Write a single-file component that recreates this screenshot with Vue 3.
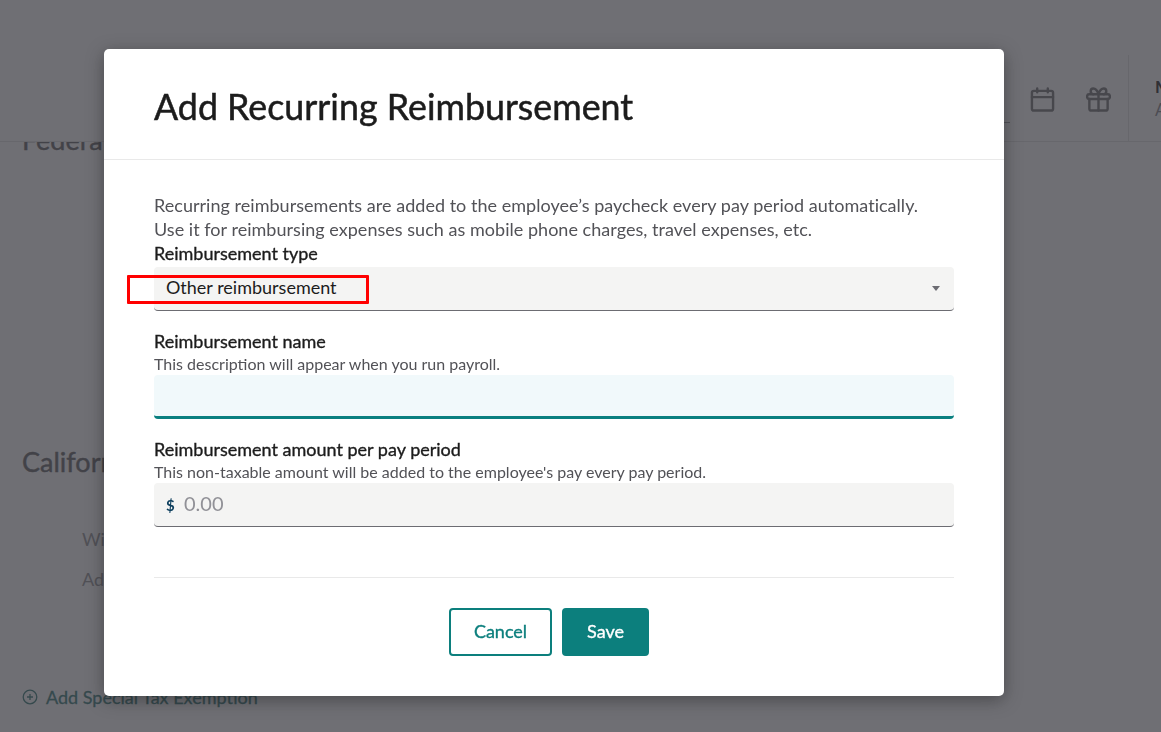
<script setup>
const note = [
  'Recurring reimbursements are added to the employee’s paycheck every pay period automatically.',
  'Use it for reimbursing expenses such as mobile phone charges, travel expenses, etc.',
]
</script>

<template>
  <div class="page">
    <header class="topbar">
      <div class="search"></div>
      <svg class="icon calendar" viewBox="0 0 26 26" fill="none" stroke="currentColor" stroke-width="2.5" stroke-linecap="round" stroke-linejoin="round">
        <rect x="2" y="4" width="22" height="20.5" rx="2" />
        <path d="M2 10.500h22M7.500 1.500v4M18.500 1.500v4" />
      </svg>
      <svg class="icon gift" viewBox="0 0 26 26" fill="none" stroke="currentColor" stroke-width="2.5" stroke-linecap="round" stroke-linejoin="round">
        <path d="M3.500 12.500v10a2 2 0 0 0 2 2h15a2 2 0 0 0 2-2v-10" />
        <rect x="1.200" y="7.500" width="23.600" height="5" rx="2" />
        <path d="M13 7.500v17M13 7.500c-1-3.500-3-6-5.500-6-3.500 0-3.500 6 0 6M13 7.500c1-3.500 3-6 5.500-6 3.500 0 3.500 6 0 6" />
      </svg>
      <div class="account">
        <strong>M</strong>
        <span>A</span>
      </div>
    </header>
    <main class="content">
      <h2 class="federal">Federal</h2>
      <h2 class="california">California</h2>
      <p class="row first">Withholding</p>
      <p class="row">Additional</p>
      <a class="add-link">
        <svg viewBox="0 0 16 16" fill="none" stroke="currentColor" stroke-width="1.3">
          <circle cx="8" cy="8" r="6.8" />
          <path d="M8 5v6M5 8h6" />
        </svg>
        Add Special Tax Exemption
      </a>
    </main>
  </div>

  <div class="overlay">
    <section class="modal">
      <div class="modal-head">
        <h1>Add Recurring Reimbursement</h1>
      </div>
      <div class="modal-body">
        <p v-for="line in note" :key="line" class="note">{{ line }}</p>

        <label class="label">Reimbursement type</label>
        <div class="select">
          <span>Other reimbursement</span>
          <i class="caret"></i>
          <div class="highlight"></div>
        </div>

        <label class="label name-label">Reimbursement name</label>
        <div class="hint">This description will appear when you run payroll.</div>
        <input class="field focused" type="text" />

        <label class="label amount-label">Reimbursement amount per pay period</label>
        <div class="hint">This non-taxable amount will be added to the employee's pay every pay period.</div>
        <div class="money">
          <span class="dollar">$</span>
          <input type="text" placeholder="0.00" />
        </div>

        <div class="actions">
          <button class="btn ghost">Cancel</button>
          <button class="btn solid">Save</button>
        </div>
      </div>
    </section>
  </div>
</template>

<style>
html, body {
  margin: 0;
  height: 732px;
  overflow: hidden;
}
</style>

<style scoped>
.page {
  height: 732px;
  display: flex;
  flex-direction: column;
  background: #fff;
  font-family: Lato, "Liberation Sans", sans-serif;
  overflow: hidden;
}

.topbar {
  height: 142px;
  flex: none;
  display: flex;
  align-items: center;
  box-sizing: border-box;
  border-bottom: 1px solid #e8e8e8;
  padding-top: 84px;
  padding-left: 1030px;
  padding-bottom: 26px;
  position: relative;
}

.search {
  position: absolute;
  left: 990px;
  width: 20px;
  top: 122px;
  border-bottom: 1px solid #b0b0b0;
}

.icon {
  width: 25px;
  height: 25px;
  color: #8c8c8e;
  flex: none;
}

.gift {
  margin-left: 31px;
}

.account {
  flex: none;
  align-self: stretch;
  margin-top: -29px;
  margin-bottom: -26px;
  margin-left: 17px;
  padding: 20px 0 0 26px;
  border-left: 1px solid #e8e8e8;
  font-size: 17px;
  line-height: 23px;
  color: #9c9ca2;
}

.account strong,
.account span {
  display: block;
}

.account strong {
  color: #4a4a4c;
}

.content {
  flex: 1;
  overflow: hidden;
  padding-left: 22px;
}

.federal,
.california {
  margin: 0;
  font-size: 27px;
  line-height: 32px;
  font-weight: 400;
  -webkit-text-stroke: 0.4px currentColor;
  color: #7e7e80;
}

.federal {
  margin-top: -18px;
}

.california {
  margin-top: 290px;
}

.row {
  margin: 16px 0 0 60px;
  font-size: 18px;
  line-height: 24px;
  color: #a8a8aa;
}

.row.first {
  margin-top: 49px;
}

.add-link {
  display: flex;
  align-items: center;
  gap: 8px;
  margin-top: 95px;
  font-size: 18px;
  line-height: 22px;
  -webkit-text-stroke: 0.3px currentColor;
  color: #5b9390;
}

.add-link svg {
  width: 16px;
  height: 16px;
}

.overlay {
  position: fixed;
  inset: 0;
  box-sizing: border-box;
  padding: 49px 0 0 104px;
  background: rgba(34, 34, 41, 0.65);
  font-family: Lato, "Liberation Sans", sans-serif;
  color: #1c1c1c;
}

.modal {
  width: 900px;
  height: 647px;
  background: #fff;
  border-radius: 5px;
  box-shadow: 0 4px 18px rgba(0, 0, 0, 0.35);
}

.modal-head {
  height: 111px;
  box-sizing: border-box;
  border-bottom: 1px solid #e9e9e9;
  padding: 36px 50px 0;
}

.modal-head h1 {
  margin: 0;
  font-size: 35.800px;
  line-height: 44px;
  font-weight: 400;
  -webkit-text-stroke: 0.5px currentColor;
  color: #1c1c1c;
}

.modal-body {
  padding: 33px 50px 0;
}

.note {
  margin: 0;
  font-size: 18px;
  line-height: 24px;
  letter-spacing: 0.03px;
  color: #525257;
}

.label {
  display: block;
  font-size: 18px;
  line-height: 24px;
  -webkit-text-stroke: 0.35px currentColor;
  color: #1c1c1c;
}

.name-label,
.amount-label {
  margin-top: 18px;
}

.hint {
  margin-top: 1px;
  font-size: 16px;
  line-height: 20px;
  color: #525257;
}

.select,
.field,
.money {
  display: flex;
  align-items: center;
  width: 800px;
  height: 44px;
  box-sizing: border-box;
  background: #f4f4f3;
  border: 0;
  border-bottom: 1px solid #6c6c72;
  border-radius: 4px;
  padding: 0 12px;
  font: inherit;
  font-size: 18px;
}

.select {
  position: relative;
  margin-top: 2px;
  justify-content: space-between;
  color: #1c1c1c;
}

.select span {
  margin-top: -3px;
}

.caret {
  margin-right: 2px;
  border: 4.500px solid transparent;
  border-top: 5px solid #6c6c72;
  border-bottom: 0;
}

.highlight {
  position: absolute;
  left: -27px;
  top: 8px;
  width: 242px;
  height: 29px;
  box-sizing: border-box;
  border: 3px solid #f00;
  border-radius: 1px;
}

.field.focused {
  display: block;
  margin-top: 1px;
  background: #f1f9fb;
  border-bottom: 3px solid #0a8080;
  outline: none;
}

.money {
  margin-top: 1px;
  gap: 9px;
}

.dollar {
  width: 9px;
  font-size: 15px;
  font-weight: 700;
  color: #0b3d5c;
}

.money input {
  flex: 1;
  border: 0;
  padding: 0 0 4px;
  background: transparent;
  outline: none;
  font: inherit;
  font-size: 20px;
}

.money input::placeholder {
  color: #919197;
  opacity: 1;
}

.actions {
  margin-top: 50px;
  padding: 30px 10px 0 0;
  border-top: 1px solid #e9e9e9;
  display: flex;
  justify-content: center;
  gap: 10px;
}

.btn {
  height: 48px;
  box-sizing: border-box;
  border-radius: 4px;
  border: 2px solid #0c7f7d;
  padding: 0 0 3px;
  font-family: inherit;
  font-size: 18px;
  -webkit-text-stroke: 0.35px currentColor;
}

.ghost {
  width: 103px;
  background: #fff;
  color: #0c7f7d;
}

.solid {
  width: 87px;
  background: #0c7f7d;
  color: #fff;
}
</style>
